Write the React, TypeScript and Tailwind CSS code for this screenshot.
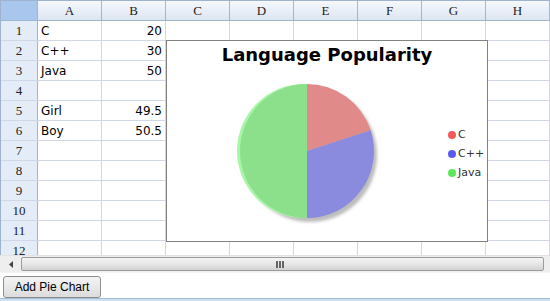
import React from 'react';

const columns = ['A', 'B', 'C', 'D', 'E', 'F', 'G', 'H'];

const rows: { a?: string; b?: string }[] = [
  { a: 'C', b: '20' },
  { a: 'C++', b: '30' },
  { a: 'Java', b: '50' },
  {},
  { a: 'Girl', b: '49.5' },
  { a: 'Boy', b: '50.5' },
  {},
  {},
  {},
  {},
  {},
  {},
];

const legend = [
  { label: 'C', color: '#f25a5a' },
  { label: 'C++', color: '#5a5af2' },
  { label: 'Java', color: '#5ae85a' },
];

const PieChart: React.FC = () => {
  return (
    <div className="absolute left-[165px] top-[39px] w-[322px] h-[202px] border border-[#828282] bg-white flex flex-col">
      <div className="pt-[3px] h-[30px] text-center text-[18px] leading-[22px] font-bold text-black font-['DejaVu_Sans',sans-serif]">
        Language Popularity
      </div>
      <div className="flex">
        <svg width="281" height="168" viewBox="0 0 281 168">
          <defs>
            <filter id="blur" x="-20%" y="-20%" width="140%" height="140%">
              <feGaussianBlur stdDeviation="1.5" />
            </filter>
          </defs>
          {/* shadow */}
          <circle cx="143" cy="84" r="67" fill="#bdbdbd" filter="url(#blur)" />
          {/* light rim on green half */}
          <path d="M137,147 A67,67 0 0 1 137,13 L139,13 L139,147 Z" fill="#a9f5a9" />
          {/* slices */}
          <path d="M140,80 L140,13 A67,67 0 0 1 203.7,59.3 Z" fill="#e08a8a" />
          <path d="M140,80 L203.7,59.3 A67,67 0 0 1 140,147 Z" fill="#8a8ade" />
          <path d="M140,80 L140,147 A67,67 0 0 1 140,13 Z" fill="#8ce08c" />
        </svg>
        <div className="flex flex-col pt-[54px] text-[11px] leading-[19px] text-[#333] font-['DejaVu_Sans',sans-serif]">
          {legend.map((item) => (
            <div key={item.label} className="flex items-center gap-[2px]">
              <span className="w-[8px] h-[8px] rounded-full" style={{ backgroundColor: item.color }} />
              <span>{item.label}</span>
            </div>
          ))}
        </div>
      </div>
    </div>
  );
};

export default function App() {
  return (
    <div className="w-[550px] h-[301px] bg-white overflow-hidden flex flex-col">
      {/* Sheet */}
      <div className="relative h-[255px] overflow-hidden border-t border-l border-[#9db3cf]">
        {/* Column headers */}
        <div className="flex h-[20px] border-b border-[#9eb6ce]">
          <div className="w-[37px] shrink-0 bg-[#a9c6ec] border-r border-[#9eb6ce]" />
          {columns.map((c) => (
            <div
              key={c}
              className="w-[64px] shrink-0 flex items-center justify-center border-r border-[#9eb6ce] bg-gradient-to-b from-[#f5f8fc] to-[#dde6f2] text-[13px] text-[#222] font-['Liberation_Serif',serif]"
            >
              {c}
            </div>
          ))}
        </div>

        {/* Rows */}
        {rows.map((r, i) => (
          <div key={i} className="flex h-[20px] border-b border-[#d0d8e8]">
            <div className="w-[37px] shrink-0 flex items-center justify-center bg-[#e4ecf7] border-r border-[#9eb6ce] text-[13px] text-[#222] font-['Liberation_Serif',serif]">
              {i + 1}
            </div>
            {columns.map((c) => (
              <div
                key={c}
                className={`w-[64px] shrink-0 flex items-center px-[3px] border-r border-[#d0d8e8] text-[12px] text-black font-['DejaVu_Sans',sans-serif] ${
                  c === 'B' ? 'justify-end' : 'justify-start'
                }`}
              >
                {c === 'A' ? r.a : c === 'B' ? r.b : null}
              </div>
            ))}
          </div>
        ))}

        <PieChart />
      </div>

      {/* Horizontal scrollbar */}
      <div className="flex items-center h-[17px] bg-[#eeeeee] border-t border-[#e2e2e2]">
        <div className="w-[21px] shrink-0 flex items-center justify-center">
          <svg width="4" height="7" viewBox="0 0 4 7">
            <path d="M4,0 L0,3.5 L4,7 Z" fill="#444" />
          </svg>
        </div>
        <div className="w-[523px] h-[14px] rounded-[2px] border border-[#9c9c9c] bg-gradient-to-b from-[#f4f4f4] via-[#e6e6e6] to-[#d2d2d2] flex items-center justify-center">
          <div className="flex gap-[1px] mr-[6px]">
            <span className="w-[2px] h-[7px] bg-[#666]" />
            <span className="w-[2px] h-[7px] bg-[#666]" />
            <span className="w-[2px] h-[7px] bg-[#666]" />
          </div>
        </div>
      </div>

      {/* Toolbar */}
      <div className="flex-1 flex items-start pt-[3px] pl-[3px] border-t border-[#f4f4f4]">
        <button className="h-[22px] w-[98px] rounded-[3px] border border-[#8e8e8e] bg-gradient-to-b from-[#f4f4f4] to-[#dcdcdc] text-[12px] text-black font-['Liberation_Sans',sans-serif]">
          Add Pie Chart
        </button>
      </div>
      <div className="h-[3px] border-t border-[#a3bbd9] bg-[#d2e1f2]" />
    </div>
  );
}
